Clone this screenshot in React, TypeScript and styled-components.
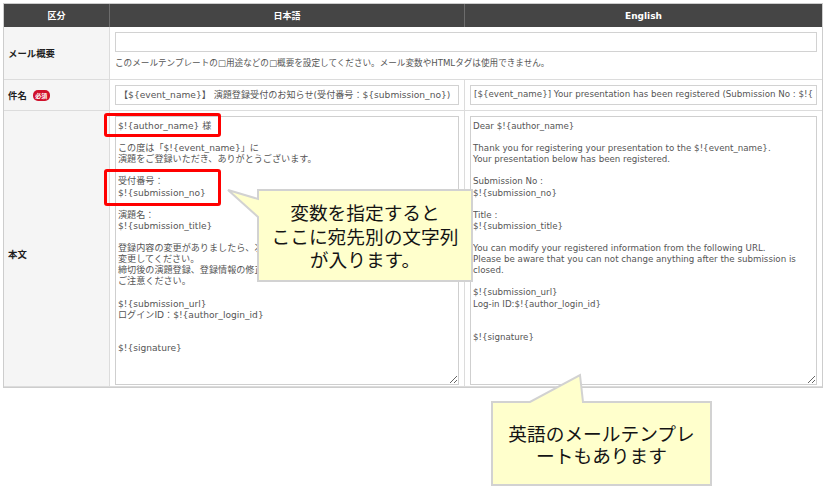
import React from "react";
import styled, { createGlobalStyle } from "styled-components";

const GlobalStyle = createGlobalStyle`
  html, body { margin: 0; padding: 0; background: #ffffff; }
  body { font-family: "DejaVu Sans", "Noto Sans CJK JP", sans-serif; }
`;

const FONT = `"DejaVu Sans", "Noto Sans CJK JP", sans-serif`;

const Page = styled.div`
  position: relative;
  width: 835px;
  height: 496px;
  overflow: hidden;
  box-sizing: border-box;
  padding: 3px 0 0 3px;
  background: #fff;
`;

const Table = styled.div`
  display: grid;
  grid-template-columns: 106px 355px 357px;
  grid-template-rows: 23px 53px 31px 276px;
  width: 820px;
  box-sizing: border-box;
  border: 1px solid #cdcdcd;
`;

const HeadCell = styled.div<{ $last?: boolean }>`
  display: flex;
  align-items: center;
  justify-content: center;
  background: #454545;
  color: #fff;
  font-family: ${FONT};
  font-weight: bold;
  font-size: 9px;
  box-sizing: border-box;
  border-right: ${(p) => (p.$last ? "none" : "1px solid #6c6c6c")};
`;

const LabelCell = styled.div`
  display: flex;
  align-items: center;
  gap: 6px;
  padding-left: 4px;
  background: #f5f5f5;
  color: #1e1e1e;
  font-family: ${FONT};
  font-weight: bold;
  font-size: 9.4px;
  box-sizing: border-box;
  border-right: 1px solid #dcdcdc;
  border-bottom: 1px solid #dcdcdc;
`;

const BodyLabel = styled(LabelCell)`
  padding-top: 10px;
`;

const Badge = styled.span`
  display: inline-flex;
  align-items: center;
  justify-content: center;
  width: 17px;
  height: 11px;
  border-radius: 5px;
  background: #d0112b;
  color: #fff;
  font-size: 6px;
  font-weight: bold;
  font-family: "Noto Sans CJK JP", sans-serif;
`;

const DataCell = styled.div<{ $span?: boolean; $last?: boolean; $center?: boolean }>`
  display: flex;
  flex-direction: column;
  justify-content: ${(p) => (p.$center ? "center" : "flex-start")};
  grid-column: ${(p) => (p.$span ? "span 2" : "auto")};
  padding: ${(p) => (p.$center ? "0 5px" : "5px 5px 0 5px")};
  background: #fff;
  box-sizing: border-box;
  border-right: ${(p) => (p.$last ? "none" : "1px solid #dcdcdc")};
  border-bottom: 1px solid #dcdcdc;
  min-width: 0;
`;

const TextInput = styled.input<{ $ja?: boolean }>`
  display: block;
  width: 100%;
  height: 20px;
  box-sizing: border-box;
  border: 1px solid #d2d2d2;
  padding: 0 3px 2px 3px;
  margin: 0;
  font-family: ${FONT};
  font-size: ${(p) => (p.$ja ? "9.1px" : "8.7px")};
  color: #555;
  background: #fff;
  outline: none;
`;

const Helper = styled.div`
  margin-top: 6px;
  font-family: ${FONT};
  font-size: 8.6px;
  line-height: 11px;
  color: #555;
  white-space: nowrap;
`;

const Area = styled.textarea<{ $ja?: boolean }>`
  display: block;
  width: 100%;
  height: 269px;
  box-sizing: border-box;
  border: 1px solid #cfcfcf;
  padding: 4px 2px;
  margin: 0;
  font-family: ${FONT};
  font-size: ${(p) => (p.$ja ? "9.1px" : "8.7px")};
  line-height: 11.1px;
  color: #555;
  background: #fff;
  outline: none;
  overflow: hidden;
`;

const Highlight = styled.div<{ $x: number; $y: number; $w: number; $h: number }>`
  position: absolute;
  left: ${(p) => p.$x}px;
  top: ${(p) => p.$y}px;
  width: ${(p) => p.$w}px;
  height: ${(p) => p.$h}px;
  box-sizing: border-box;
  border: 3px solid #ff0000;
  border-radius: 3px;
`;

const CalloutFrame = styled.div<{ $x: number; $y: number; $w: number; $h: number }>`
  position: absolute;
  left: ${(p) => p.$x}px;
  top: ${(p) => p.$y}px;
  width: ${(p) => p.$w}px;
  height: ${(p) => p.$h}px;
`;

const CalloutShape = styled.svg`
  position: absolute;
  left: 0;
  top: 0;
  width: 100%;
  height: 100%;
  overflow: visible;
`;

const CalloutText = styled.div<{ $x: number; $y: number; $w: number; $h: number; $lh: number }>`
  position: absolute;
  left: ${(p) => p.$x}px;
  top: ${(p) => p.$y}px;
  width: ${(p) => p.$w}px;
  height: ${(p) => p.$h}px;
  display: flex;
  flex-direction: column;
  align-items: center;
  justify-content: center;
  font-family: "Noto Sans CJK JP", sans-serif;
  font-size: 18.7px;
  line-height: ${(p) => p.$lh}px;
  color: #141414;
  white-space: nowrap;
`;

type Rect = { x: number; y: number; w: number; h: number };

function Callout({ frame, box, path, lines, lh }: { frame: Rect; box: Rect; path: string; lines: string[]; lh: number }) {
  return (
    <CalloutFrame $x={frame.x} $y={frame.y} $w={frame.w} $h={frame.h}>
      <CalloutShape viewBox={`${frame.x} ${frame.y} ${frame.w} ${frame.h}`}>
        <path d={path} fill="#ffffcc" stroke="#d2d2d2" strokeWidth={2} strokeLinejoin="miter" />
      </CalloutShape>
      <CalloutText $x={box.x - frame.x} $y={box.y - frame.y} $w={box.w} $h={box.h} $lh={lh}>
        {lines.map((l) => (
          <span key={l}>{l}</span>
        ))}
      </CalloutText>
    </CalloutFrame>
  );
}

const jaBody = `$!{author_name} 様

この度は「$!{event_name}」に
演題をご登録いただき、ありがとうございます。

受付番号：
$!{submission_no}

演題名：
$!{submission_title}

登録内容の変更がありましたら、次のURLから
変更してください。
締切後の演題登録、登録情報の修正はできませんので
ご注意ください。

$!{submission_url}
ログインID：$!{author_login_id}


$!{signature}`;

const enBody = `Dear $!{author_name}

Thank you for registering your presentation to the $!{event_name}.
Your presentation below has been registered.

Submission No :
$!{submission_no}

Title :
$!{submission_title}

You can modify your registered information from the following URL.
Please be aware that you can not change anything after the submission is
closed.

$!{submission_url}
Log-in ID:$!{author_login_id}


$!{signature}`;

export default function App() {
  return (
    <>
      <GlobalStyle />
      <Page>
        <Table>
          <HeadCell>区分</HeadCell>
          <HeadCell>日本語</HeadCell>
          <HeadCell $last>English</HeadCell>

          <LabelCell>メール概要</LabelCell>
          <DataCell $span $last>
            <TextInput readOnly defaultValue="" />
            <Helper>このメールテンプレートの□用途などの□概要を設定してください。メール変数やHTMLタグは使用できません。</Helper>
          </DataCell>

          <LabelCell>
            件名<Badge>必須</Badge>
          </LabelCell>
          <DataCell $center>
            <TextInput $ja readOnly defaultValue="【${event_name}】 演題登録受付のお知らせ(受付番号：${submission_no})" />
          </DataCell>
          <DataCell $center $last>
            <TextInput readOnly defaultValue="[${event_name}] Your presentation has been registered (Submission No : $!{submission_no})" />
          </DataCell>

          <BodyLabel>本文</BodyLabel>
          <DataCell>
            <Area $ja readOnly defaultValue={jaBody} />
          </DataCell>
          <DataCell $last>
            <Area readOnly defaultValue={enBody} />
          </DataCell>
        </Table>

        <Highlight $x={104} $y={113} $w={117} $h={24} />
        <Highlight $x={104} $y={169} $w={117} $h={37} />

        <Callout
          frame={{ x: 220, y: 182, w: 260, h: 106 }}
          box={{ x: 258, y: 190, w: 214, h: 91 }}
          path="M258,190 H472 V281 H258 V217 L228,190 L258,199 Z"
          lines={["変数を指定すると", "ここに宛先別の文字列", "が入ります。"]}
          lh={23.5}
        />
        <Callout
          frame={{ x: 485, y: 368, w: 235, h: 125 }}
          box={{ x: 492, y: 402, w: 219, h: 83 }}
          path="M492,402 H530 L580,375 L583,402 H711 V485 H492 Z"
          lines={["英語のメールテンプレ", "ートもあります"]}
          lh={21.5}
        />
      </Page>
    </>
  );
}
